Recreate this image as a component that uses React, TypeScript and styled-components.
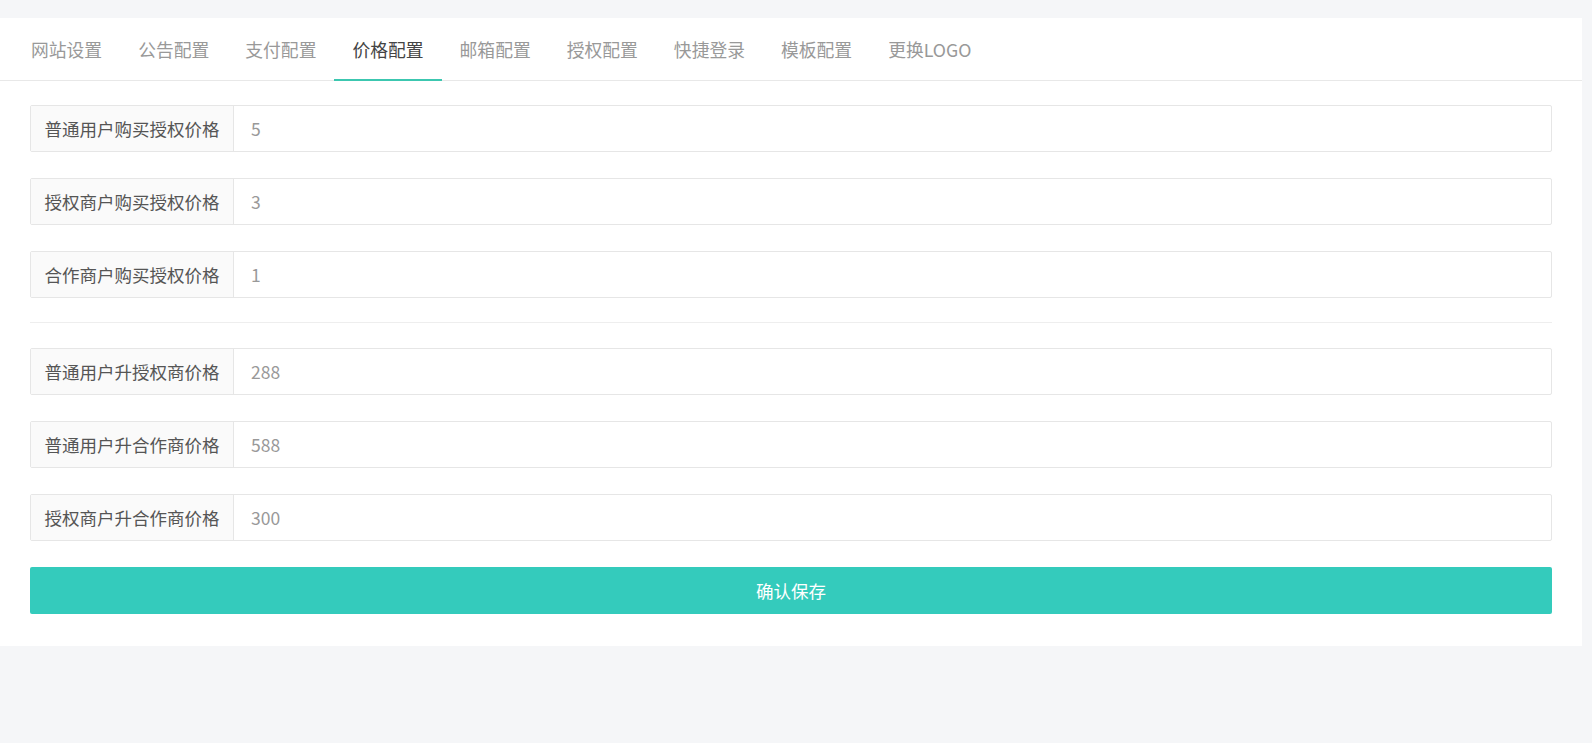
import React from "react";
import styled, { createGlobalStyle } from "styled-components";

const Global = createGlobalStyle`
  body { margin: 0; background: #f5f6f8; font-family: "Noto Sans CJK SC", "Noto Sans", sans-serif; }
`;
const Page = styled.div`padding: 18px 10px 0 0; height: 725px;`;
const Card = styled.div`background: #fff; padding-bottom: 32px;`;
const Tabs = styled.div`display: flex; height: 62px; border-bottom: 1px solid #e8e8e8; padding-left: 13px;`;
const Tab = styled.div<{ $active?: boolean }>`
  padding: 0 18px; font-size: 17.8px; line-height: 62px; color: ${p => p.$active ? "#444" : "#999"};
  border-bottom: 2px solid ${p => p.$active ? "#3cc7b0" : "transparent"}; margin-bottom: -1px;
`;
const Form = styled.div`padding: 24px 30px 0 30px; display: flex; flex-direction: column;`;
const Row = styled.div`display: flex; height: 47px; border: 1px solid #e6e6e6; border-radius: 2px; margin-bottom: 26px; box-sizing: border-box;`;
const Label = styled.div`width: 202px; background: #fafafa; border-right: 1px solid #e6e6e6; font-size: 17.5px; color: #555; display: flex; align-items: center; justify-content: center;`;
const Input = styled.input`flex: 1; border: 0; outline: none; padding: 0 17px; font-size: 17.5px; color: #999; font-family: inherit; background: transparent;`;
const Divider = styled.div`height: 1px; background: #eee; margin: -2px 0 25px;`;
const Button = styled.button`height: 47px; background: #34cbbc; color: #fff; border: 0; border-radius: 2px; font-size: 17.5px; font-family: inherit;`;

const tabs = ["网站设置","公告配置","支付配置","价格配置","邮箱配置","授权配置","快捷登录","模板配置","更换LOGO"];
const a = [["普通用户购买授权价格","5"],["授权商户购买授权价格","3"],["合作商户购买授权价格","1"]];
const b = [["普通用户升授权商价格","288"],["普通用户升合作商价格","588"],["授权商户升合作商价格","300"]];

export default function App() {
  return (<>
    <Global />
    <Page><Card>
      <Tabs>{tabs.map((t,i)=><Tab key={t} $active={i===3}>{t}</Tab>)}</Tabs>
      <Form>
        {a.map(([l,v])=><Row key={l}><Label>{l}</Label><Input defaultValue={v}/></Row>)}
        <Divider/>
        {b.map(([l,v])=><Row key={l}><Label>{l}</Label><Input defaultValue={v}/></Row>)}
        <Button>确认保存</Button>
      </Form>
    </Card></Page>
  </>);
}
